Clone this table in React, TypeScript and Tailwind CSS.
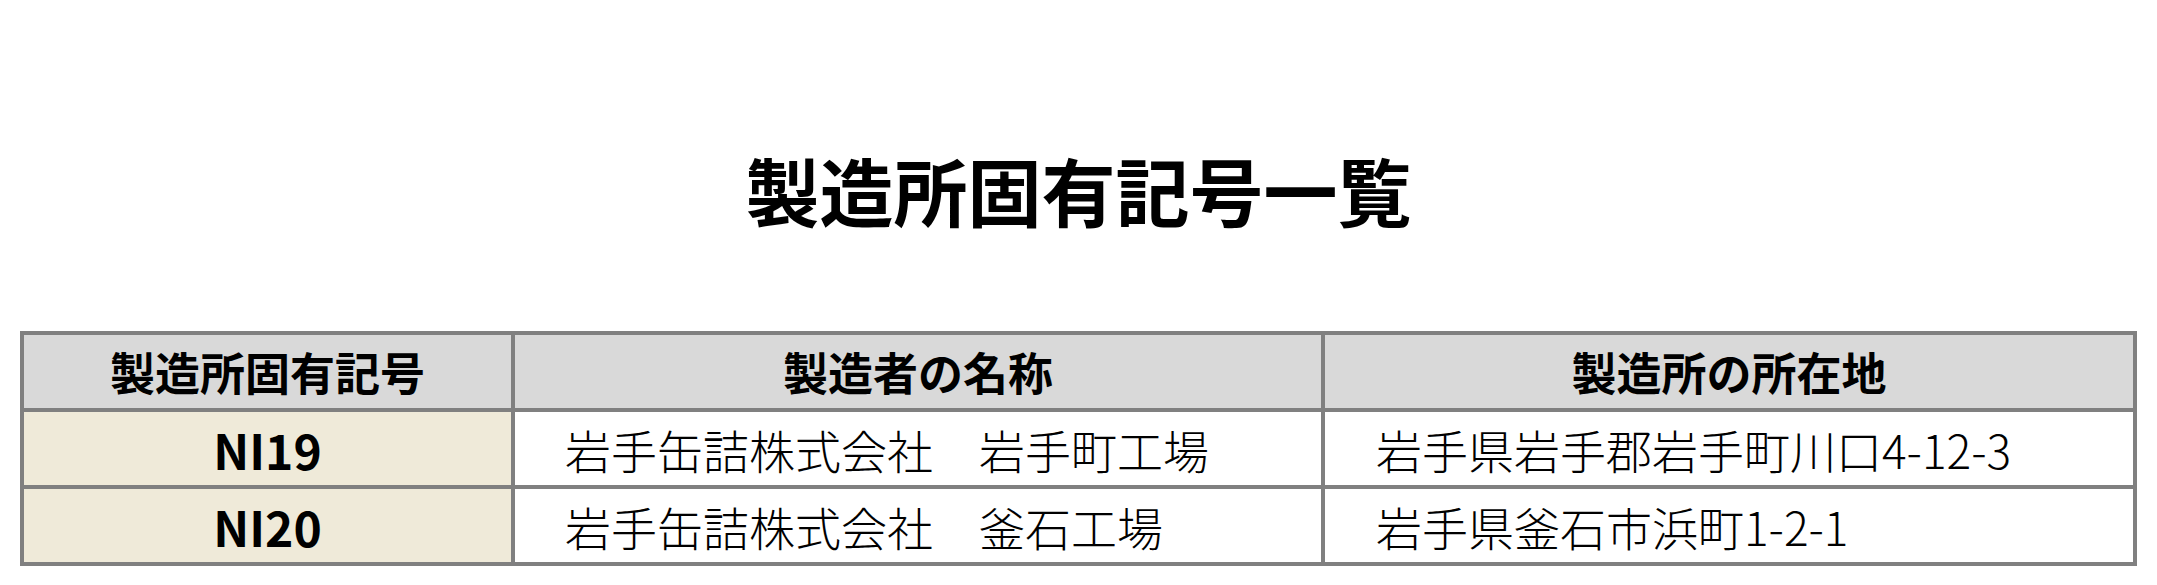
const FONT = 'font-["Noto_Sans_CJK_JP","Noto_Sans",sans-serif]';

const ROWS = [
  { code: 'NI19', name: '岩手缶詰株式会社　岩手町工場', address: '岩手県岩手郡岩手町川口4-12-3' },
  { code: 'NI20', name: '岩手缶詰株式会社　釜石工場', address: '岩手県釜石市浜町1-2-1' },
];

const HEADERS = ['製造所固有記号', '製造者の名称', '製造所の所在地'];

export default function App() {
  return (
    <div className={`h-[585px] w-[2157px] bg-white pt-[152px] text-black ${FONT}`}>
      <h1 className="text-center text-[74px] font-bold leading-none">製造所固有記号一覧</h1>

      <div className="ml-[20px] mt-[105px] grid w-[2117px] grid-cols-[487px_806px_808px] gap-[4px] bg-[#808080] p-[4px]">
        {HEADERS.map((h) => (
          <div
            key={h}
            className="flex h-[73px] items-center justify-center bg-[#d9d9d9] text-[45px] font-bold leading-none"
          >
            {h}
          </div>
        ))}
        {ROWS.map((row) => (
          <div key={row.code} className="contents">
            <div className="flex h-[73px] items-center justify-center bg-[#efead9] text-[48px] font-bold leading-none">
              {row.code}
            </div>
            <div className="flex h-[73px] items-center bg-white pl-[50px] text-[46px] font-light leading-none">
              {row.name}
            </div>
            <div className="flex h-[73px] items-center bg-white pl-[51px] text-[46px] font-light leading-none">
              {row.address}
            </div>
          </div>
        ))}
      </div>
    </div>
  );
}
